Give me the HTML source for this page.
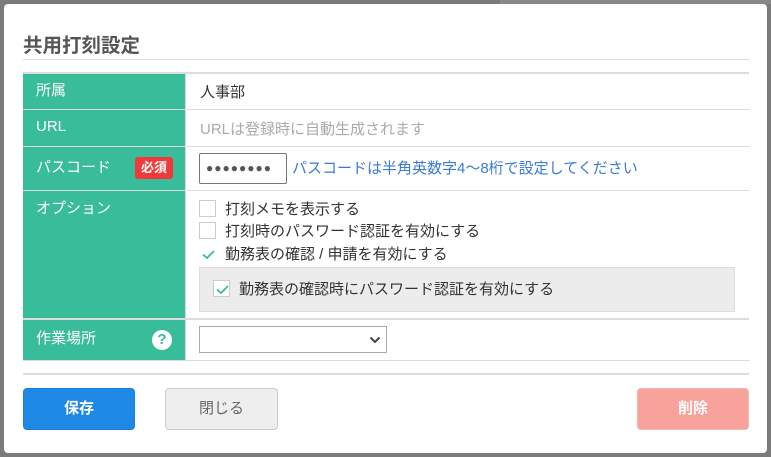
<!DOCTYPE html>
<html><head><meta charset="utf-8"><style>
*{margin:0;padding:0;box-sizing:border-box}
body{width:771px;height:457px;background:#7b7b7b;font-family:"Liberation Sans","Noto Sans CJK JP",sans-serif;position:relative;overflow:hidden;font-size:15px;color:#333}
.modal{position:absolute;left:4px;top:4px;width:763px;height:449px;background:#fff;border-radius:4px}
.a{position:absolute}
.lab{position:absolute;left:23px;width:162px;background:#38bc9a;color:#fff;padding-left:13px;font-size:15px}
.cell{position:absolute;left:186px;width:563px;background:#fff}
.cb{position:absolute;width:17px;height:17px;border:1px solid #ccc;background:#fff}
.cb svg{position:absolute;left:1px;top:1px}
.t{position:absolute;font-size:15px;color:#333;white-space:nowrap}
.btn{position:absolute;top:388px;height:42px;border-radius:4px;text-align:center;line-height:40px;font-size:15px;font-weight:bold}
</style></head><body>
<div class="a" style="left:500px;top:0;width:271px;height:4px;background:#888"></div>
<div class="modal"></div>
<div class="a" style="left:23px;top:29px;font-size:19.5px;font-weight:bold;color:#555">共用打刻設定</div>
<div class="a" style="left:23px;top:59px;width:726px;height:1px;background:#ddd"></div>
<div class="a" style="left:23px;top:72px;width:726px;height:289px;background:#ddd"></div>
<div class="lab" style="top:74px;height:35px;line-height:33px">所属</div>
<div class="cell" style="top:74px;height:35px"></div>
<div class="t" style="left:200px;top:81px">人事部</div>
<div class="lab" style="top:110px;height:36px;line-height:34px">URL</div>
<div class="cell" style="top:110px;height:36px"></div>
<div class="t" style="left:200px;top:118px;color:#aaa">URLは登録時に自動生成されます</div>
<div class="lab" style="top:147px;height:43px;line-height:41px">パスコード</div>
<div class="a" style="left:135px;top:157px;width:38px;height:22px;background:#f03a3a;border-radius:3px;color:#fff;font-size:13px;font-weight:bold;text-align:center;line-height:22px">必須</div>
<div class="cell" style="top:147px;height:43px"></div>
<div class="a" style="left:199px;top:153px;width:88px;height:31px;border:1px solid #777;border-radius:2px;font-size:12px;line-height:29px;padding-left:6px;color:#555;letter-spacing:1px">●●●●●●●●</div>
<div class="t" style="left:292px;top:157px;color:#3a7bd5">パスコードは半角英数字4〜8桁で設定してください</div>
<div class="lab" style="top:191px;height:127px;line-height:36px">オプション</div>
<div class="cell" style="top:191px;height:127px"></div>
<div class="cb" style="left:199px;top:200px"></div>
<div class="t" style="left:225px;top:198px">打刻メモを表示する</div>
<div class="cb" style="left:199px;top:222px"></div>
<div class="t" style="left:225px;top:220px">打刻時のパスワード認証を有効にする</div>
<div class="cb" style="left:199px;top:245px;border-color:#fff"><svg width="15" height="15"><path d="M2 7.5 L6 11 L13 4" stroke="#38bc9a" stroke-width="1.8" fill="none"/></svg></div>
<div class="t" style="left:225px;top:243px">勤務表の確認 / 申請を有効にする</div>
<div class="a" style="left:199px;top:267px;width:536px;height:45px;background:#ececec;border:1px solid #ddd"></div>
<div class="cb" style="left:213px;top:280px"><svg width="15" height="15"><path d="M2 7.5 L6 11 L13 4" stroke="#38bc9a" stroke-width="1.8" fill="none"/></svg></div>
<div class="t" style="left:239px;top:278px">勤務表の確認時にパスワード認証を有効にする</div>
<div class="lab" style="top:320px;height:40px;line-height:38px">作業場所</div>
<div class="a" style="left:152px;top:330px;width:20px;height:20px;border-radius:50%;background:#fff;color:#38bc9a;font-weight:bold;font-size:15px;text-align:center;line-height:20px">?</div>
<div class="cell" style="top:320px;height:40px"></div>
<div class="a" style="left:199px;top:326px;width:188px;height:27px;border:1px solid #aaa;background:#fff"><svg class="a" style="left:169px;top:9px" width="12" height="8"><path d="M1.5 1.5 L6 6 L10.5 1.5" stroke="#444" stroke-width="2" fill="none"/></svg></div>
<div class="a" style="left:23px;top:373px;width:726px;height:2px;background:#ddd"></div>
<div class="btn" style="left:23px;width:112px;background:#1e88e5;color:#fff;border:1px solid #1a7fd8">保存</div>
<div class="btn" style="left:165px;width:113px;background:#eee;color:#666;border:1px solid #ccc;font-weight:normal">閉じる</div>
<div class="btn" style="left:637px;width:112px;background:#f9a19b;color:#fff;border:1px solid #eba">削除</div>
</body></html>
